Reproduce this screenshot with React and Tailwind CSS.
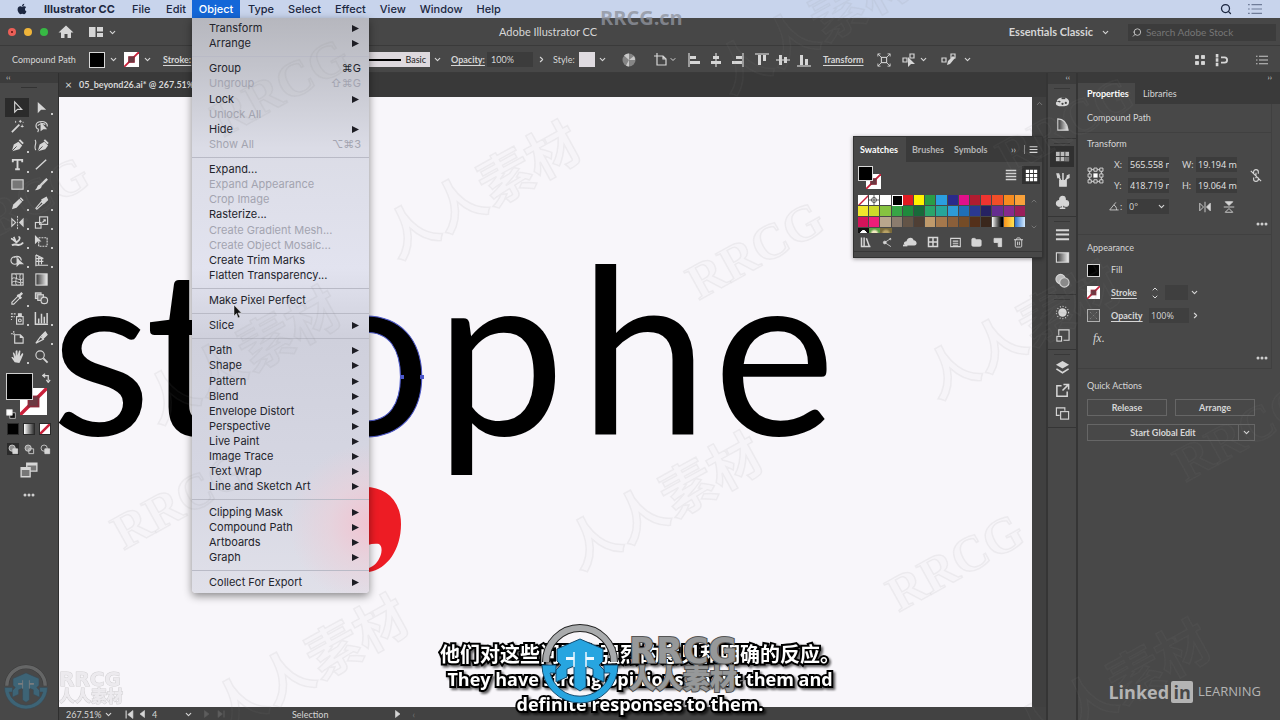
import React, { useState } from 'react';
import { FaApple } from 'react-icons/fa';
import { ChevronDown, ChevronRight, ChevronUp, Search, Trash2, Folder } from 'lucide-react';

const MENUS_LEFT = ['File', 'Edit'];
const MENUS_RIGHT = ['Type', 'Select', 'Effect', 'View', 'Window', 'Help'];

// sub = has a submenu, off = disabled
const OBJECT_MENU = [
  [{ label: 'Transform', sub: true }, { label: 'Arrange', sub: true }],
  [
    { label: 'Group', keys: '⌘G' },
    { label: 'Ungroup', keys: '⇧⌘G', off: true },
    { label: 'Lock', sub: true },
    { label: 'Unlock All', off: true },
    { label: 'Hide', sub: true },
    { label: 'Show All', keys: '⌥⌘3', off: true },
  ],
  [
    { label: 'Expand...' },
    { label: 'Expand Appearance', off: true },
    { label: 'Crop Image', off: true },
    { label: 'Rasterize...' },
    { label: 'Create Gradient Mesh...', off: true },
    { label: 'Create Object Mosaic...', off: true },
    { label: 'Create Trim Marks' },
    { label: 'Flatten Transparency...' },
  ],
  [{ label: 'Make Pixel Perfect' }],
  [{ label: 'Slice', sub: true }],
  [
    { label: 'Path', sub: true },
    { label: 'Shape', sub: true },
    { label: 'Pattern', sub: true },
    { label: 'Blend', sub: true },
    { label: 'Envelope Distort', sub: true },
    { label: 'Perspective', sub: true },
    { label: 'Live Paint', sub: true },
    { label: 'Image Trace', sub: true },
    { label: 'Text Wrap', sub: true },
    { label: 'Line and Sketch Art', sub: true },
  ],
  [
    { label: 'Clipping Mask', sub: true },
    { label: 'Compound Path', sub: true },
    { label: 'Artboards', sub: true },
    { label: 'Graph', sub: true },
  ],
  [{ label: 'Collect For Export', sub: true }],
];

const SWATCHES = [
  '#ffffff', '#000000', '#e11b22', '#fff200', '#2a9d46', '#2b9fe0', '#2a2a8c', '#e0108a', '#b01c30', '#ee3430', '#f04e28', '#f68b1f', '#f9a13a',
  '#f0e62c', '#cddb2a', '#86c340', '#37a546', '#1f8a3c', '#18693a', '#2aa56a', '#26a69a', '#2e9bd6', '#1f6fb5', '#2b3990', '#262262', '#652d90', '#862a8c', '#9a1f5a',
  '#d4145a', '#ed1e79', '#b9a68c', '#8b7c6e', '#635447', '#4f3f35', '#c09a6b', '#a5784c', '#8a5f3a', '#754c27', '#54301a', '#3a271c',
];

const Icon = ({ children, size = 16 }) => (
  <svg width={size} height={size} viewBox="0 0 16 16" fill="none" stroke="currentColor" strokeWidth="1.2" aria-hidden="true" className="shrink-0">
    {children}
  </svg>
);

const F = 'currentColor';

const TOOLS = [
  ['Selection', <path d="M5 2v11l3-3h4.500z" />],
  ['Direct Selection', <path d="M4 2v12l3.500-3.500H13z" fill={F} stroke="none" />],
  ['Magic Wand', <><path d="M2 14l8-8" strokeWidth="1.800" /><path d="M11 1v3M9.500 2.500h3M6 2v2M13 6v3M11.500 8h3M14 3v1" strokeWidth="1" /></>],
  ['Lasso', <><path d="M5 11C1 10 1 4 6 3s9 1 8 5M4 7c2-2 6-3 8-1M5 11l-1 3" /><path d="M7 3v10l3-2h4z" fill={F} stroke="none" /></>],
  ['Pen', <><path d="M2 14l2-7 5-3 4 4-3 4z" fill={F} stroke="none" /><path d="M10 2l4 4" strokeWidth="2" /><path d="M2 14l5-5" stroke="#484848" strokeWidth="1" /></>],
  ['Curvature', <><path d="M4 14l2-7 5-3 4 4-3 4z" fill={F} stroke="none" /><path d="M11 2l4 4" strokeWidth="2" /><path d="M4 14l5-5" stroke="#484848" strokeWidth="1" /><path d="M1 2c3 3-2 7 1 11" /></>],
  ['Type', <path d="M3 5.500V3h10v2.500M8 3v10M5.500 13h5" strokeWidth="2" />],
  ['Line Segment', <path d="M2 13L13 3" strokeWidth="1.500" />],
  ['Rectangle', <rect x="2" y="3" width="12" height="10" fill="#777" />],
  ['Paintbrush', <><path d="M14 2L7 9" strokeWidth="2.500" /><path d="M7 8c3 2 0 6-6 6 3-2 2-6 6-6z" fill={F} stroke="none" /></>],
  ['Pencil', <><path d="M2 14l1.500-5L10 3l3 3-6 6.500z" fill={F} stroke="none" /><path d="M11 2l3 3" strokeWidth="1.600" /></>],
  ['Eraser', <><path d="M8 6l2 2-7 6-1-1z" /><path d="M8 5l3 3M9 4l4-2 1 2-3 3z" fill={F} strokeWidth="2" /></>],
  ['Reflect', <><path d="M2 4v8l4-4z" /><path d="M8 1v14" strokeDasharray="2 1" strokeWidth="1" /><path d="M14.500 3v10l-5-5z" fill={F} stroke="none" /></>],
  ['Scale', <><rect x="6" y="2" width="8.500" height="8" /><rect x="1.500" y="8" width="6" height="6" /><path d="M9 8l3-3M10 5h2v2" /></>],
  ['Width', <><path d="M1 5c3 0 4 5 7 3s3-5 1-5M4 3l3 7" strokeWidth="1.800" /><path d="M2 12c5-3 8 3 12-3" strokeWidth="2" /></>],
  ['Free Transform', <><rect x="5" y="4" width="9" height="9" strokeDasharray="2 1" /><path d="M1 1v10l3-3h4z" fill={F} stroke="none" /></>],
  ['Shape Builder', <><circle cx="5" cy="8" r="4" /><path d="M4 5c3-3 8-1 8 3" /><path d="M7 5v10l3-3h5z" fill={F} stroke="none" /></>],
  ['Perspective Grid', <path d="M2 2v12M5 4v9M8 5v7M2 2l8 4M2 6h8M2 9h8M2 13h13" />],
  ['Mesh', <><rect x="2" y="2" width="12" height="12" /><path d="M2 7c4-3 8 4 12 0M2 11c4-3 8 2 12 0M6 2c3 4-2 8 1 12M11 2c-2 4 2 8 0 12" strokeWidth="1" /></>],
  ['Gradient', <rect x="2" y="2" width="12" height="12" fill="url(#grad)" />],
  ['Eyedropper', <><path d="M9 5l2 2-7 7H2v-2z" /><path d="M8 4l4 4M10 5l3-3" strokeWidth="2.500" /></>],
  ['Blend', <><rect x="1.500" y="2" width="6" height="6" fill="#999" /><rect x="4" y="4" width="6" height="6" fill="#777" /><circle cx="11" cy="10" r="3.500" fill="#555" /></>],
  ['Symbol Sprayer', <><rect x="7" y="6" width="7" height="8" /><path d="M9 6V3h3v3" fill={F} /><circle cx="10.500" cy="10" r="1.500" /><path d="M1 3h2M4 3h2M1 6h2M4 6h1M1 9h1" /></>],
  ['Column Graph', <path d="M1.500 1v13H15M5 8v5M8 3v10M11 6v7M14 2v11" strokeWidth="1.600" />],
  ['Artboard', <><path d="M5 5h6l3 3v6H5zM11 5v3h3" /><path d="M4 1v4M1 4h4" strokeDasharray="2 1" /></>],
  ['Slice', <><path d="M2 14l5-7 3 3z" /><path d="M8 6l4-4 2 3-4 4z" fill={F} /></>],
  ['Hand', <path d="M5 14L1.500 9c1-1 2 0 3 1L3 4c1-1 2 0 3 4V2c1-1 2-1 2 0v5l1.500-5c1-1 2 0 1.500 1l-.500 5 2-3c1-1 2 0 1.500 1L12 11l-2 4z" fill={F} stroke="none" />],
  ['Zoom', <><circle cx="6.500" cy="6.500" r="4.500" /><path d="M10 10l4.500 4.500" strokeWidth="2" /></>],
];

// tools without a flyout triangle
const SINGLE_TOOLS = ['Selection', 'Magic Wand', 'Lasso', 'Curvature', 'Mesh', 'Gradient', 'Blend', 'Artboard', 'Zoom'];

const DOCK = [
  [
    ['Color', <><path d="M2 8c0-5 12-6 13 0 0 4-2 5-7 5-5 0-7-1-7-3s2-2 4-1c2 0 1-3-3-1z" fill={F} stroke="none" /><path d="M7 4.500h4" stroke="#444" strokeWidth="2" /><circle cx="8" cy="10.500" r="1.200" fill="#444" stroke="none" /><circle cx="11.500" cy="9.500" r="1.200" fill="#444" stroke="none" /></>],
    ['Color Guide', <path d="M3 2c7 0 10 6 11 12H3z" fill="url(#grad)" />],
  ],
  [
    ['Swatches', <><rect x="1" y="3" width="14" height="10" fill="#bbb" stroke="none" /><path d="M1 8h14M5.500 3v10M10.500 3v10" stroke="#333" strokeWidth="1" /><path d="M11 8.500h4V13h-4z" fill="#777" stroke="none" /></>],
    ['Brushes', <><path d="M5 9h7v6H5z" fill={F} /><path d="M6 9L3 3M8.500 9V1M11 9l3-4" strokeWidth="1.600" /><path d="M2 2l2 0 1 3-2 1zM13 4l2-1v3l-2 1z" fill={F} /></>],
    ['Symbols', <><circle cx="8" cy="4.500" r="3" fill={F} /><circle cx="4.500" cy="9" r="3" fill={F} /><circle cx="11.500" cy="9" r="3" fill={F} /><path d="M8 7v7M5 14h6" strokeWidth="1.600" /></>],
  ],
  [
    ['Stroke', <path d="M1 3.500h14M1 8h14M1 13h14" strokeWidth="2" />],
    ['Gradient', <rect x="1.500" y="3" width="13" height="10" fill="url(#grad)" />],
    ['Transparency', <><circle cx="6" cy="6.500" r="5" fill="#bbb" /><circle cx="10" cy="10" r="5" fill="#8a8a8a" /></>],
  ],
  [
    ['Appearance', <><circle cx="8" cy="8" r="4.500" fill={F} stroke="none" /><circle cx="8" cy="8" r="6.500" strokeDasharray="1 2" /></>],
    ['Graphic Styles', <><path d="M4 8V2h11v11H9" /><rect x="2" y="9" width="5" height="5" /></>],
  ],
  [
    ['Layers', <><path d="M8 1l7 4-7 4-7-4z" fill={F} stroke="none" /><path d="M1.500 9.500L8 13.500l6.500-4" strokeWidth="1.800" /></>],
    ['Asset Export', <path d="M7 3H2v11h11V9M9 1.500h5.500V7M14 2L8 8" strokeWidth="1.600" />],
    ['Artboards', <><path d="M5 10H1.500V2h9v3" /><rect x="6" y="6" width="8.500" height="8" /></>],
  ],
];

const ALIGN = [
  ['Align left', 'M3 4h6v3H3zM3 9h10v3H3z', 'M2 1v14'],
  ['Align center', 'M5 4h6v3H5zM3 9h10v3H3z', 'M8 1v14'],
  ['Align right', 'M7 4h6v3H7zM3 9h10v3H3z', 'M14 1v14'],
  ['Align top', 'M4 3h3v10H4zM9 3h3v6H9z', 'M1 2h14'],
  ['Align middle', 'M4 3h3v10H4zM9 5h3v6H9z', 'M1 8h14'],
  ['Align bottom', 'M4 3h3v10H4zM9 7h3v6H9z', 'M1 14h14'],
];

const CHINESE = "font-['Noto_Sans_CJK_SC',sans-serif]";

const WATERMARKS = [
  { x: 480, y: 187, cjk: true },
  { x: 812, y: 22, cjk: true },
  { x: 1020, y: 327, cjk: true },
  { x: 308, y: 660, cjk: true },
  { x: 662, y: 498, cjk: true },
  { x: 240, y: 352, cjk: true },
  { x: 1110, y: 685, cjk: true },
  { x: 280, y: 87 },
  { x: 755, y: 250 },
  { x: 180, y: 500 },
  { x: 955, y: 562 },
  { x: 1242, y: 432 },
  { x: 1065, y: 125 },
  { x: 20, y: 205 },
];

const IconButton = ({ label, className = '', children }) => (
  <button type="button" aria-label={label} className={`flex items-center justify-center shrink-0 ${className}`}>
    {children}
  </button>
);

const Chevron = ({ label = 'More options', className = '' }) => (
  <IconButton label={label} className={className}>
    <ChevronDown size={9} strokeWidth={3} />
  </IconButton>
);

const NoneSwatch = ({ size = 15 }) => (
  <svg width={size} height={size} viewBox="0 0 16 16" aria-hidden="true" className="block">
    <rect width="16" height="16" fill="#fff" />
    <path d="M0 16L16 0" stroke="#c9203a" strokeWidth="2" />
    <rect x="5" y="5" width="6" height="6" fill="#6b3a42" stroke="#8a2a3a" />
  </svg>
);

const Dots = () => (
  <svg width="12" height="4" viewBox="0 0 12 4" fill="#cfcfcf"><circle cx="2" cy="2" r="1.500" /><circle cx="6" cy="2" r="1.500" /><circle cx="10" cy="2" r="1.500" /></svg>
);

const MenuBar = () => {
  const [open, setOpen] = useState(true);

  return (
    <nav className="relative z-20 flex h-[18px] shrink-0 items-center bg-[#c8d4ec] font-[Inter,sans-serif] text-[11px] font-medium text-[#1c2740]">
      <button type="button" aria-label="Apple" className="ml-4 mr-4"><FaApple size={12} /></button>
      <button type="button" className="w-20 text-left font-bold">Illustrator CC</button>
      {MENUS_LEFT.map(name => (
        <button key={name} type="button" className="w-[34px] pl-2 text-left">{name}</button>
      ))}
      <div className="relative h-full">
        <button type="button" onClick={() => setOpen(!open)} className="h-full w-12 bg-[#1467d8] text-white">
          Object
        </button>
        {open && <ObjectMenu />}
      </div>
      <div className="flex gap-3.5 pl-2">
        {MENUS_RIGHT.map(name => (
          <button key={name} type="button">{name}</button>
        ))}
      </div>
      <div className="ml-auto flex items-center gap-4 pr-[18px]">
        <button type="button" aria-label="Spotlight"><Search size={12} strokeWidth={2.5} /></button>
        <IconButton label="Notification Center">
          <Icon size={14}><path d="M4 3h12M4 8h12M4 13h12M0 3h2M0 8h2M0 13h2" stroke="#6f7c98" /></Icon>
        </IconButton>
      </div>
    </nav>
  );
};

const ObjectMenu = () => (
  <div
    role="menu"
    className="absolute left-0 top-full flex h-[575px] w-[177px] flex-col rounded-b-[4px] bg-[radial-gradient(circle_at_100%_88%,#f0c4d1_0,#ead0dab0_40px,transparent_80px),linear-gradient(#b6b7be_0,#c3c4cc_50px,#dbdce6_130px,#e2e3ef_250px,#cfd0dc_320px,#d5d6e2_450px,#e0e0e9_100%)] pb-[3px] pt-[3px] font-normal text-[#23242c] shadow-[0_3px_9px_rgba(0,0,0,0.45)]"
  >
    {OBJECT_MENU.map((group, i) => (
      <React.Fragment key={i}>
        {i > 0 && <div className="flex h-2.5 shrink-0 items-center"><div className="h-px w-full bg-[#b9bac6]" /></div>}
        {group.map(item => (
          <button
            key={item.label}
            type="button"
            role="menuitem"
            disabled={item.off}
            className="flex min-h-0 flex-1 items-center justify-between pl-[17px] pr-2 leading-none disabled:text-[#a3a4b0]"
          >
            <span>{item.label}</span>
            {item.keys && <span>{item.keys}</span>}
            {item.sub && (
              <svg width="7" height="7" viewBox="0 0 7 7" className="mr-0.5"><path d="M0 0l7 3.500-7 3.500z" fill="#1d1d24" /></svg>
            )}
          </button>
        ))}
      </React.Fragment>
    ))}
  </div>
);

const TitleBar = () => (
  <header className="flex h-7 shrink-0 items-center border-b border-[#3a3a3a] bg-[#474747] pt-px">
    <div className="flex w-[499px] shrink-0 items-center pl-2">
      <div className="flex gap-2">
        <button type="button" aria-label="Close" className="flex size-2 items-center justify-center rounded-full bg-[#ec5f57]"><span className="size-0.5 rounded-full bg-[#5c0f0c]" /></button>
        <button type="button" aria-label="Minimize" className="size-2 rounded-full bg-[#f0b53a]" />
        <button type="button" aria-label="Zoom window" className="size-2 rounded-full bg-[#37b944]" />
      </div>
      <IconButton label="Home" className="ml-2.5">
        <Icon><path d="M8 1.500L.5 8.500H3V14h3.500v-4h3v4H13V8.500h2.500z" fill={F} stroke="none" /></Icon>
      </IconButton>
      <IconButton label="Arrange documents" className="ml-3.5">
        <Icon><path d="M1 3h6.500v10H1zM9 3h6v4.500H9zM9 9h6v4H9z" fill={F} stroke="none" /></Icon>
      </IconButton>
      <Chevron className="ml-1" />
    </div>
    <h1 className="text-[11px]">Adobe Illustrator CC</h1>
    <div className="ml-auto flex items-center pr-1">
      <button type="button" className="mr-[18px] flex items-center gap-2 text-[11px] font-bold">
        Essentials Classic <ChevronDown size={9} strokeWidth={3} />
      </button>
      <label className="flex h-[17px] w-[148px] items-center gap-1 bg-[#3c3c3c] px-1 text-[10px]">
        <Search size={11} className="-scale-x-100" />
        <input type="text" placeholder="Search Adobe Stock" className="w-full min-w-0 bg-transparent placeholder:text-[#767676] focus:outline-none" />
      </label>
    </div>
  </header>
);

const ControlBar = () => (
  <div className="flex h-[27px] shrink-0 items-center border-b border-[#3a3a3a] bg-[#474747] pt-px">
    <span className="w-[77px] whitespace-nowrap pl-3">Compound Path</span>
    <IconButton label="Fill" className="ml-3 size-4 border border-[#d8d8d8] bg-black" />
    <Chevron className="ml-0.5 w-3" />
    <IconButton label="Stroke color" className="ml-[5px]"><NoneSwatch /></IconButton>
    <Chevron className="ml-0.5 w-3" />
    <a href="#stroke" className="ml-2.5 w-[205px] shrink-0 font-bold underline underline-offset-2">Stroke:</a>
    <button type="button" className="flex h-[15px] w-[62px] items-center justify-end bg-[#ded9de] pr-1 text-[#222]">
      <span className="mr-1 h-0.5 flex-1 bg-black" />Basic
    </button>
    <Chevron className="mr-[7px] w-3.5" />
    <label htmlFor="opacity" className="w-9 font-bold underline underline-offset-2">Opacity:</label>
    <input id="opacity" defaultValue="100%" className="h-[15px] w-[46px] bg-[#3c3c3c] px-1 focus:outline-none" />
    <IconButton label="Opacity slider" className="w-4"><ChevronRight size={9} strokeWidth={3} /></IconButton>
    <span className="ml-1 w-[26px]">Style:</span>
    <IconButton label="Graphic style" className="h-[15px] w-4 bg-[#dfdbe0]" />
    <Chevron className="w-3.5" />
    <IconButton label="Recolor artwork" className="ml-3">
      <Icon><circle cx="8" cy="8" r="6.500" fill="#858585" stroke="none" /><path d="M8 8L3 3.500A6.500 6.500 0 0 1 8 1.500zM8 8l5-4a6.500 6.500 0 0 1 1 4zM8 8l-3 5.500A6.500 6.500 0 0 0 8 14.500z" fill="#c8c8c8" stroke="none" /></Icon>
    </IconButton>
    <IconButton label="Document setup" className="ml-4">
      <Icon><path d="M4 4h6l3 3v6H4zM10 4v3h3M4 1v3M1 4h3" /></Icon>
    </IconButton>
    <Chevron className="w-2" />
    <div className="ml-2.5 flex items-center gap-[5px]">
      {ALIGN.map(([label, bars, rule], i) => (
        <IconButton key={label} label={label} className={i === 3 ? 'ml-1' : ''}>
          <Icon><path d={bars} fill={F} stroke="none" /><path d={rule} /></Icon>
        </IconButton>
      ))}
    </div>
    <a href="#transform" className="ml-[11px] font-bold underline underline-offset-2">Transform</a>
    <IconButton label="Isolate" className="ml-[13px]">
      <Icon size={14}><rect x="5" y="5" width="6" height="6" /><path d="M1 1l4 4M15 1l-4 4M1 15l4-4M15 15l-4-4M1 4V1h3M12 1h3v3M1 12v3h3M12 15h3v-3" strokeWidth="1" /></Icon>
    </IconButton>
    <IconButton label="Select similar" className="ml-2.5">
      <Icon><path d="M2 6h4v4H2zM9 2h4v4H9z" /><path d="M7 5v10l3-3h4z" fill={F} stroke="none" /></Icon>
    </IconButton>
    <Chevron className="w-3.5" />
    <IconButton label="Edit similar shapes" className="ml-2.5">
      <Icon><path d="M1 6h4v4H1zM10 2h4v4h-4z" /><path d="M6 13l1-4 5-5 2 2-5 6z" fill={F} stroke="none" /></Icon>
    </IconButton>
    <Chevron className="ml-1 w-3.5" />
    <div className="ml-auto flex items-center pr-3">
      <IconButton label="Align to pixel grid"><Icon size={12}><path d="M2 2h4v4H2zM10 2h4v4h-4zM2 10h4v4H2zM10 10h4v4h-4z" fill={F} /></Icon></IconButton>
      <IconButton label="Snap to pixel" className="ml-2"><Icon size={14}><path d="M2 1h3v4H2zM2 6h3v4H2zM2 11h3v4H2z" fill={F} stroke="none" /><path d="M8 5h4a3 3 0 0 1 0 6H8" strokeWidth="2" /></Icon></IconButton>
      <IconButton label="Control bar menu" className="ml-7"><Icon size={12}><path d="M4 3h12M4 8h12M4 13h12M0 3h2M0 8h2M0 13h2" /></Icon></IconButton>
    </div>
  </div>
);

const Toolbar = () => (
  <aside className="flex w-[59px] shrink-0 flex-col items-center border-r border-[#2f2f2f] bg-[#484848]">
    <div className="h-2.5 w-full shrink-0 bg-[#3c3c3c] pl-1.5 text-[8px] leading-[9px]">‹‹</div>
    <div className="mb-2.5 mt-1 h-px w-4 bg-[#333]" />
    <div className="grid h-[268px] shrink-0 grid-cols-[24px_24px] auto-rows-fr">
      {TOOLS.map(([name, art], i) => (
        <button key={name} type="button" aria-label={`${name} Tool`} className={`relative flex items-center justify-center ${i === 0 ? 'bg-[#2b2b2b]' : ''}`}>
          <Icon size={15}>{art}</Icon>
          {!SINGLE_TOOLS.includes(name) && <span className="absolute bottom-0.5 right-0 size-[2px] bg-[#c8c8c8]" />}
        </button>
      ))}
    </div>
    {/* Fill and stroke */}
    <div className="relative mt-[7px] h-[44px] w-[46px] shrink-0">
      <div className="absolute bottom-0.5 left-3.5"><NoneSwatch size={27} /></div>
      <button type="button" aria-label="Fill" className="absolute left-0 top-0 size-[27px] border border-[#cfcfcf] bg-black" />
      <div className="absolute right-0 top-0"><Icon size={10}><path d="M2 4h8v8M5 1L1 4l4 3M7 11l3 4 3-4" strokeWidth="2" /></Icon></div>
      <div className="absolute -bottom-0.5 left-0"><Icon size={10}><path d="M6 6h9v9H6z" fill="#111" /><path d="M1 1h9v9H1z" fill="#fff" /></Icon></div>
    </div>
    <div className="mt-1.5 flex gap-1">
      <button type="button" aria-label="Color" className="size-3 border border-[#2a2a2a] bg-black" />
      <button type="button" aria-label="Gradient" className="size-3 border border-[#2a2a2a] bg-linear-to-r from-white to-[#333]" />
      <button type="button" aria-label="None" className="size-3 border border-[#2a2a2a] bg-white">
        <Icon size={10}><path d="M0 16L16 0" stroke="#c9203a" strokeWidth="4" /></Icon>
      </button>
    </div>
    <div className="mt-2 flex gap-1">
      {['Draw Normal', 'Draw Behind', 'Draw Inside'].map((name, i) => (
        <IconButton key={name} label={name} className={`size-3 ${i === 0 ? 'bg-[#2b2b2b]' : ''}`}>
          <Icon size={11}><circle cx="6" cy="6" r="4.500" fill={i === 2 ? 'none' : '#8c8c8c'} /><path d="M7 7h7v7H7z" fill={i === 1 ? 'none' : F} /></Icon>
        </IconButton>
      ))}
    </div>
    <IconButton label="Change Screen Mode" className="mt-1.5">
      <Icon size={18}><path d="M6 2h9v7H6z" fill="#777" /><path d="M1 6h8v8H1z" fill="#777" /><path d="M6 3h9M1 7h8" strokeWidth="2" /></Icon>
    </IconButton>
    <IconButton label="Edit Toolbar" className="mt-3.5"><Dots /></IconButton>
  </aside>
);

const Canvas = () => (
  <main className="min-h-0 flex-1 overflow-hidden bg-[#f8f6fa]">
    <svg width="100%" height="100%" className="block font-[Lato,sans-serif]">
      {/* Lettering, the o is the selected path */}
      <g fontSize="232" fill="#000">
        <text x="-8" y="338">s</text>
        <text x="86" y="338">t</text>
        <text x="241" y="338" stroke="#4b57c9" strokeWidth="1">o</text>
        <text x="376" y="338">p</text>
        <text x="520" y="338">h</text>
        <text x="654" y="338">e</text>
      </g>
      <path d="M341 278h4v4h-4zM361 278h4v4h-4z" fill="#4b57c9" />
      {/* Red apostrophe */}
      <path d="M306 390c20 0 36 13 36 37 0 26-14 45-32 48-16 0-26-10-26-22 0-10 8-15 16-13-16-2-28-12-28-25 0-15 14-25 34-25z" fill="#ed1c24" />
      <path d="M300 452c6-4 14-6 20-5 6 4 1 20-10 24z" fill="#f8f6fa" />
    </svg>
  </main>
);

const StatusBar = () => (
  <footer className="flex h-[13px] shrink-0 items-center bg-[#424242] pl-[7px] pt-px leading-none">
    <select aria-label="Zoom level" defaultValue="267.51%" className="w-[38px] appearance-none">
      <option>267.51%</option>
    </select>
    <ChevronDown size={9} strokeWidth={3} />
    <IconButton label="First artboard" className="ml-3"><Icon size={9}><path d="M2 1v14" strokeWidth="2" /><path d="M14 1v14L5 8z" fill={F} /></Icon></IconButton>
    <IconButton label="Previous artboard" className="ml-1"><Icon size={8}><path d="M13 1v14L4 8z" fill={F} /></Icon></IconButton>
    <select aria-label="Artboard" defaultValue="4" className="ml-1.5 w-8 appearance-none">
      <option>4</option>
    </select>
    <ChevronDown size={9} strokeWidth={3} />
    <div className="ml-2.5 flex gap-1.5 text-[#5d5d5d]">
      <Icon size={8}><path d="M3 1v14l9-7z" fill={F} /></Icon>
      <Icon size={8}><path d="M14 1v14" strokeWidth="2" /><path d="M2 1v14l9-7z" fill={F} /></Icon>
    </div>
    <span className="ml-[67px]">Selection</span>
    <IconButton label="Status menu" className="ml-[66px]"><Icon size={8}><path d="M3 1v14l9-7z" fill={F} /></Icon></IconButton>
    <span className="ml-2.5 text-[#777]">‹</span>
  </footer>
);

const Dock = () => (
  <aside className="flex w-[32px] shrink-0 flex-col border-x-2 border-[#353535] bg-[#484848]">
    <div className="h-[11px] bg-[#3c3c3c] pr-1.5 text-right text-[8px] leading-[9px]">‹‹</div>
    {DOCK.map((group, i) => (
      <div key={i} className="flex flex-col items-center border-b border-[#353535] pb-[3px]">
        <div className="mt-1 h-px w-4 bg-[#383838]" />
        {group.map(([name, art]) => (
          <IconButton key={name} label={name} className={`mt-0.5 h-[21px] w-6 ${name === 'Swatches' ? 'bg-[#303030]' : ''}`}>
            <Icon size={15}>{art}</Icon>
          </IconButton>
        ))}
      </div>
    ))}
  </aside>
);

const Field = ({ id, label, value }) => (
  <div className="flex items-center">
    <label htmlFor={id} className="w-3.5">{label}</label>
    <input id={id} defaultValue={value} className="h-[15px] w-[41px] bg-[#3c3c3c] pl-0.5 font-['Open_Sans',sans-serif] text-[#e4e4e4] focus:outline-none" />
  </div>
);

const Properties = () => (
  <aside className="flex w-[202px] shrink-0 flex-col bg-[#484848]">
    <div className="h-2.5 shrink-0 bg-[#3a3a3a] pr-2 text-right text-[8px] leading-[9px]">››</div>
    <div className="flex h-[21px] shrink-0 bg-[#3a3a3a]">
      <button type="button" className="w-[57px] bg-[#484848] pl-[9px] text-left font-bold text-white">Properties</button>
      <button type="button" className="px-2">Libraries</button>
    </div>
    <div className="mr-2 border-b border-r border-[#404040] px-[9px] py-2 leading-[12px]">Compound Path</div>
    <section className="mr-2 border-b border-r border-[#404040] pb-2 pl-[9px] pr-[3px] pt-1">
      <h2 className="leading-[14px]">Transform</h2>
      <div className="mt-1.5 flex items-center">
        <Icon size={17}>
          <path d="M1 1h3v3H1zM6.500 1h3v3h-3zM12 1h3v3h-3zM1 6.500h3v3H1zM12 6.500h3v3h-3zM1 12h3v3H1zM6.500 12h3v3h-3zM12 12h3v3h-3zM4 2.500h2.500M9.500 2.500H12M4 13.500h2.500M9.500 13.500H12M2.500 4v2.500M2.500 9.500V12M13.500 4v2.500M13.500 9.500V12" strokeWidth="0.900" />
          <path d="M6 6h4v4H6z" fill="#fff" stroke="none" />
        </Icon>
        <div className="ml-2.5 grid grid-cols-[68px_58px] gap-y-1.5">
          <Field id="tx" label="X:" value="565.558 m" />
          <Field id="tw" label="W:" value="19.194 m" />
          <Field id="ty" label="Y:" value="418.719 m" />
          <Field id="th" label="H:" value="19.064 m" />
        </div>
        <IconButton label="Constrain proportions" className="ml-2">
          <Icon size={15}><path d="M6 6V4c0-3 5-3 5 0v2M6 10v2c0 3 5 3 5 0v-2M8.500 5v6M3 3l11 11" /></Icon>
        </IconButton>
      </div>
      <div className="mt-1.5 flex items-center pl-[22px]">
        <label htmlFor="angle" className="flex w-[18px] items-center"><Icon size={11}><path d="M14 13H1L10 2M7 6c3 1 4 4 4 7" /></Icon>:</label>
        <div className="flex h-[15px] w-[42px] items-center bg-[#3c3c3c]">
          <select id="angle" defaultValue="0°" className="w-[30px] appearance-none pl-0.5 font-['Open_Sans',sans-serif]"><option>0°</option></select>
          <ChevronDown size={9} strokeWidth={3} />
        </div>
        <IconButton label="Flip horizontal" className="ml-[30px]"><Icon size={12}><path d="M1 3v10l5-5z" /><path d="M8 1v14" /><path d="M15 3v10l-5-5z" fill={F} /></Icon></IconButton>
        <IconButton label="Flip vertical" className="ml-3"><Icon size={12}><path d="M3 1h10L8 6z" fill={F} /><path d="M1 8h14" /><path d="M3 15h10l-5-5z" /></Icon></IconButton>
      </div>
      <div className="mt-2 flex justify-end"><IconButton label="More transform options"><Dots /></IconButton></div>
    </section>
    <section className="mr-2 border-b border-r border-[#404040] pb-2 pl-[9px] pr-[3px] pt-1.5">
      <h2 className="leading-[14px]">Appearance</h2>
      <div className="mt-1 flex h-[22px] items-center">
        <IconButton label="Fill color" className="size-[13px] border border-[#d8d8d8] bg-black" />
        <span className="ml-[11px]">Fill</span>
      </div>
      <div className="flex h-[23px] items-center">
        <IconButton label="Stroke color"><NoneSwatch size={13} /></IconButton>
        <a href="#stroke" className="ml-[11px] w-[38px] font-bold underline underline-offset-2">Stroke</a>
        <div className="flex w-3 flex-col items-center">
          <IconButton label="Increase stroke"><ChevronUp size={8} strokeWidth={3} /></IconButton>
          <IconButton label="Decrease stroke"><ChevronDown size={8} strokeWidth={3} /></IconButton>
        </div>
        <input aria-label="Stroke weight" className="ml-1 h-[15px] w-[23px] bg-[#3f3f3f] focus:outline-none" />
        <Chevron className="w-3" />
      </div>
      <div className="flex h-[23px] items-center">
        <svg width="13" height="13" viewBox="0 0 13 13"><rect x=".5" y=".5" width="12" height="12" fill="#4f4f4f" stroke="#b0b0b0" /><path d="M3 3l7 7M10 3l-7 7" stroke="#7d7d7d" strokeDasharray="2 2" /></svg>
        <label htmlFor="popacity" className="ml-[11px] w-[38px] font-bold underline underline-offset-2">Opacity</label>
        <input id="popacity" defaultValue="100%" className="h-[15px] w-10 bg-[#3f3f3f] pl-0.5 font-['Open_Sans',sans-serif] focus:outline-none" />
        <IconButton label="Opacity slider" className="w-3"><ChevronRight size={9} strokeWidth={3} /></IconButton>
      </div>
      <button type="button" className="block h-[22px] pl-1.5 font-['Liberation_Serif',serif] text-[12px] italic">fx.</button>
      <div className="mt-[7px] flex justify-end"><IconButton label="More appearance options"><Dots /></IconButton></div>
    </section>
    <section className="mr-2 px-[9px] pt-2.5">
      <h2 className="leading-[14px]">Quick Actions</h2>
      <div className="mr-2 mt-1.5 grid grid-cols-2 gap-2 font-bold">
        <button type="button" className="h-[17px] border border-[#666]">Release</button>
        <button type="button" className="h-[17px] border border-[#666]">Arrange</button>
        <div className="col-span-2 flex h-[17px] border border-[#666]">
          <button type="button" className="flex-1">Start Global Edit</button>
          <Chevron className="w-4 border-l border-[#666]" />
        </div>
      </div>
    </section>
  </aside>
);

const SwatchesPanel = () => (
  <section className="absolute left-[853px] top-[136px] z-10 flex w-[190px] flex-col border border-[#333] bg-[#484848] shadow-[0_1px_4px_rgba(0,0,0,0.4)]">
    <div className="flex h-[25px] items-center bg-[#3a3a3a]">
      <button type="button" className="h-full w-[52px] bg-[#484848] pl-1.5 text-left font-bold text-white">Swatches</button>
      <button type="button" className="ml-1.5 font-bold text-[#b5b5b5]">Brushes</button>
      <button type="button" className="ml-2.5 font-bold text-[#b5b5b5]">Symbols</button>
      <span className="ml-auto mr-2">››</span>
      <IconButton label="Panel menu" className="border-l border-[#888] px-1"><Icon size={9}><path d="M1 3h14M1 8h14M1 13h14" strokeWidth="2" /></Icon></IconButton>
    </div>
    <div className="flex h-[33px] items-start justify-between pl-1 pt-1">
      <div className="relative h-6 w-7">
        <div className="absolute left-2 top-2"><NoneSwatch size={15} /></div>
        <button type="button" aria-label="Fill" className="absolute left-0 top-0 size-[15px] border border-[#d8d8d8] bg-black" />
      </div>
      <div className="flex">
        <IconButton label="List view" className="size-[18px]"><Icon size={12}><path d="M1 2h14M1 6h14M1 10h14M1 14h14" strokeWidth="2" /></Icon></IconButton>
        <IconButton label="Thumbnail view" className="ml-0.5 mr-0.5 size-[18px] bg-[#303030]"><Icon size={13}><path d="M1 1h4v4H1zM6 1h4v4H6zM11 1h4v4h-4zM1 6h4v4H1zM6 6h4v4H6zM11 6h4v4h-4zM1 11h4v4H1zM6 11h4v4H6zM11 11h4v4h-4z" fill="#fff" stroke="none" /></Icon></IconButton>
      </div>
    </div>
    <div className="flex pl-1">
      <div className="grid h-[38px] flex-1 grid-cols-15 auto-rows-[11px] overflow-hidden">
        <button type="button" aria-label="None" className="overflow-hidden border-b border-r border-[#484848] bg-white"><Icon size={11}><path d="M0 16L16 0" stroke="#c9203a" strokeWidth="2" /></Icon></button>
        <button type="button" aria-label="Registration" className="overflow-hidden border-b border-r border-[#484848] bg-white text-[#333]"><Icon size={10}><circle cx="8" cy="8" r="4" /><path d="M8 0v16M0 8h16" /></Icon></button>
        {SWATCHES.map((color, i) => (
          <button
            key={i}
            type="button"
            aria-label={`Swatch ${color}`}
            className={color === '#000000' ? 'border border-white' : 'border-b border-r border-[#484848]'}
            style={{ backgroundColor: color }}
          />
        ))}
        <button type="button" aria-label="White to black" className="border-b border-r border-[#484848] bg-linear-to-r from-white to-black" />
        <button type="button" aria-label="Orange to yellow" className="border-b border-r border-[#484848] bg-linear-to-r from-[#f7941d] to-[#ffe14d]" />
        <button type="button" aria-label="Sky" className="border-b border-r border-[#484848] bg-linear-to-r from-[#2d74c8] to-[#d6ecff]" />
        <button type="button" aria-label="Pattern 1" className="bg-[radial-gradient(circle,#fff_40%,#111_45%)]" />
        <button type="button" aria-label="Pattern 2" className="bg-[radial-gradient(circle,#f2e8c0_30%,#5da046_60%)]" />
        <button type="button" aria-label="Pattern 3" className="bg-[radial-gradient(circle,#b9a266_30%,#7a6a3a_60%)]" />
      </div>
      <div className="flex w-4 flex-col items-center justify-between py-0.5 text-[#8a8a8a]">
        <ChevronUp size={8} /><ChevronDown size={8} />
      </div>
    </div>
    <div className="flex h-[18px] items-center justify-between pl-1.5 pr-[18px]">
      <IconButton label="Swatch Libraries"><Icon size={12}><path d="M2 2v12M5.500 2v12M8.500 3l4 11M1 14h13" strokeWidth="2" /></Icon></IconButton>
      <IconButton label="Share"><Icon size={11}><path d="M13 2L4 8l9 6" /><circle cx="4" cy="8" r="2" fill={F} /><circle cx="12" cy="3" r="1" /></Icon></IconButton>
      <IconButton label="Add to Library"><Icon size={14}><path d="M4 12c-4 0-4-5 0-5 1-5 8-5 8-1 4 0 5 6 1 6z" fill={F} stroke="none" /><path d="M0 12h5" strokeWidth="2" /></Icon></IconButton>
      <IconButton label="Show Swatch Kinds"><Icon size={12}><path d="M2 2h12v12H2zM8 2v12M2 8h12" strokeWidth="2" /></Icon></IconButton>
      <IconButton label="Swatch Options"><Icon size={11}><path d="M1 2h14v12H1zM4 6h8M4 9h8M4 12h8" strokeWidth="1.500" /></Icon></IconButton>
      <IconButton label="New Color Group"><Folder size={11} fill={F} /></IconButton>
      <IconButton label="New Swatch"><Icon size={11}><path d="M3 2h11v12H9V8H3z" fill={F} /></Icon></IconButton>
      <IconButton label="Delete Swatch"><Trash2 size={11} /></IconButton>
    </div>
    <div className="h-1.5 border-t border-[#383838]" />
  </section>
);

const RrcgBadge = ({ size }) => (
  <svg width={size} height={size} viewBox="0 0 78 78" className="shrink-0 overflow-visible">
    <path d="M5 37a34 34 0 0 1 68 0" fill="none" stroke="#222" strokeWidth="8" />
    <path d="M5 37a34 34 0 0 1 68 0" fill="none" stroke="#a9abad" strokeWidth="6" />
    <path d="M1 40h14v8H9a31 31 0 0 0 60 0h-6v-8h14a38 38 0 0 1-76 0z" fill="#27a5e0" stroke="#124b70" />
    <path d="M39 14l23 10v12l-4 4 5 5v12l-11-5v-8l-7-3v21l-6 4-6-4V41l-7 3v8l-11 5V45l5-5-4-4V24z" fill="#27a5e0" stroke="#124b70" />
    <path d="M33 27v15M45 27v15" stroke="#eef8ff" strokeWidth="1.500" fill="none" />
    <path d="M25 32h8v3h-8zM45 32h8v3h-8z" fill="#eef8ff" />
  </svg>
);

const Watermarks = () => (
  <div className="pointer-events-none absolute inset-0 z-30 overflow-hidden">
    <svg width="100%" height="100%" className="absolute inset-0">
      {WATERMARKS.map(({ x, y, cjk }) => (
        <text
          key={`${x}-${y}`}
          transform={`translate(${x} ${y}) rotate(-29)`}
          textAnchor="middle"
          dominantBaseline="central"
          fontSize={cjk ? 54 : 50}
          className={cjk ? "font-['Noto_Sans_CJK_SC',sans-serif] font-bold" : "font-['Liberation_Serif',serif] font-bold"}
          fill="#808080"
          fillOpacity="0.02"
          stroke="#808080"
          strokeOpacity="0.09"
          strokeWidth="1.5"
        >
          {cjk ? '人人素材' : 'RRCG'}
        </text>
      ))}
    </svg>
    <p className="absolute left-[600px] top-[5px] font-['Open_Sans',sans-serif] text-[20px] font-bold leading-[26px] text-[#8f939d]/80">RRCG.cn</p>

    {/* Subtitles */}
    <div className="absolute inset-x-0 bottom-[3px] flex flex-col items-center text-center font-['Open_Sans','Noto_Sans_CJK_SC',sans-serif] text-[18px] font-bold leading-[25px] text-white drop-shadow-[2px_2px_1px_rgba(0,0,0,0.6)] [-webkit-text-stroke:4px_#000] [paint-order:stroke_fill]">
      <p className={`${CHINESE} text-[20px] leading-[27px]`}>他们对这些问题有强烈的意见和明确的反应。</p>
      <p>They have strong opinions about them and</p>
      <p>definite responses to them.</p>
    </div>

    <div className="absolute left-[541px] top-[625px] flex items-center gap-[10px] text-[#969899]">
      <RrcgBadge size={78} />
      <div className="[-webkit-text-stroke:2px_#555] [paint-order:stroke_fill]">
        <p className="font-['DejaVu_Sans',sans-serif] text-[35px] font-bold leading-[28px]">RRCG</p>
        <p className={`${CHINESE} text-[27px] font-black leading-[26px]`}>人人素材</p>
      </div>
    </div>
    <div className="absolute left-1 top-[665px] flex items-center gap-[11px] text-[#d2d0d4] opacity-30">
      <RrcgBadge size={44} />
      <div className="[-webkit-text-stroke:1px_#777] [paint-order:stroke_fill]">
        <p className="font-['DejaVu_Sans',sans-serif] text-[20px] font-bold leading-[16px]">RRCG</p>
        <p className={`${CHINESE} text-[16px] font-black leading-[16px]`}>人人素材</p>
      </div>
    </div>
    <div className="absolute bottom-4 right-[19px] flex items-center font-['Open_Sans',sans-serif] text-[#b4b4b4]">
      <span className="text-[18px] font-bold leading-6">Linked</span>
      <span className="ml-0.5 flex size-[22px] items-center justify-center rounded-[2px] bg-[#b4b4b4] text-[18px] font-bold leading-none text-[#474747]">in</span>
      <span className="ml-[5px] text-[13px]">LEARNING</span>
    </div>
    <svg width="9" height="14" viewBox="0 0 9 14" className="absolute left-[233px] top-[305px]">
      <path d="M1 0v11l2.500-2.500L5 13l2-1-2-4h3.500z" fill="#111" stroke="#eee" strokeWidth="0.500" />
    </svg>
  </div>
);

export default function App() {
  return (
    <div className="relative flex h-screen flex-col overflow-hidden bg-[#474747] font-[Lato,sans-serif] text-[9px] text-[#d6d6d6]">
      <svg width="0" height="0" className="absolute">
        <defs>
          <linearGradient id="grad"><stop offset="0" stopColor="#333" /><stop offset="1" stopColor="#eee" /></linearGradient>
        </defs>
      </svg>
      <MenuBar />
      <TitleBar />
      <ControlBar />
      <div className="flex min-h-0 flex-1">
        <Toolbar />
        <div className="flex min-w-0 flex-1 flex-col">
          <div className="flex h-6 shrink-0 items-center bg-[#393939] pl-1.5">
            <button type="button" aria-label="Close document" className="w-3.5 text-left text-[12px] leading-none">×</button>
            <span className="whitespace-nowrap font-bold">05_beyond26.ai* @ 267.51% (CMYK/GPU Preview)</span>
          </div>
          <div className="flex min-h-0 flex-1">
            <Canvas />
            <div className="flex w-3.5 shrink-0 flex-col items-center bg-[#404040] pt-0.5 text-[#8a8a8a]"><ChevronUp size={9} /></div>
          </div>
          <StatusBar />
        </div>
        <Dock />
        <Properties />
      </div>
      <SwatchesPanel />
      <Watermarks />
    </div>
  );
}
